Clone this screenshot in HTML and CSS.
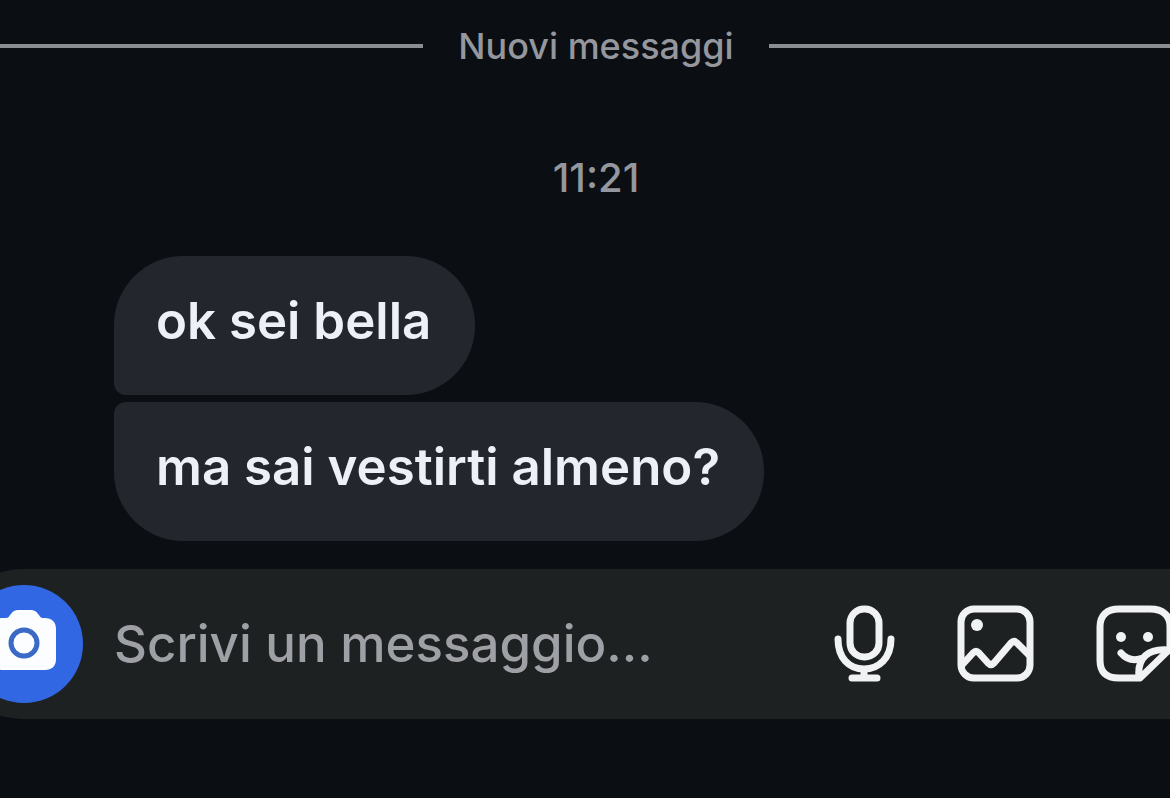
FILE: index.html
```html
<!DOCTYPE html>
<html lang="it">
<head>
    <meta charset="UTF-8">
    <meta name="viewport" content="width=device-width, initial-scale=1.0">
    <title>Chat</title>
    <link rel="stylesheet" href="styles.css">
</head>
<body>
    <main id="chat">
        <h1 id="nuovi">Nuovi messaggi</h1>
        <time id="ora">11:21</time>
        <ul id="messaggi">
            <li class="messaggio">ok sei bella</li>
            <li class="messaggio">ma sai vestirti almeno?</li>
        </ul>
        <form id="scrivi">
            <button type="button" id="fotocamera" aria-label="Fotocamera">
                <svg width="66" height="70" viewBox="0 0 66 70">
                    <path fill="#fbfdff" d="M12 9h3c2 0 3-1 4-3l1-1c2-3 4-4 7-4h13c3 0 5 1 7 4l1 1c1 2 2 3 4 3h2c7 0 11 4 11 11v30c0 7-4 11-11 11H12C5 61 1 57 1 50V20C1 13 5 9 12 9z"/>
                    <circle cx="33" cy="34" r="13" fill="none" stroke="#3b6ac6" stroke-width="5"/>
                </svg>
            </button>
            <input type="text" id="testo" placeholder="Scrivi un messaggio..." aria-label="Scrivi un messaggio">
            <div id="azioni">
                <button type="button" aria-label="Messaggio vocale">
                    <svg width="60" height="76" viewBox="0 0 60 76">
                        <rect x="15" y="3" width="29" height="48" rx="14"/>
                        <path d="M3 33c0 19 11 30 26 30s27-11 27-30M29 63v8M17 72h25"/>
                    </svg>
                </button>
                <button type="button" aria-label="Galleria">
                    <svg width="76" height="76" viewBox="0 0 76 76">
                        <rect x="3" y="3" width="69" height="69" rx="13"/>
                        <circle class="punto" cx="19" cy="19" r="6"/>
                        <path d="M4 59l11-12q3-3 6 0l9 10q3 3 6 0l17-20q3-3 6 0l12 12"/>
                    </svg>
                </button>
                <button type="button" aria-label="Adesivi">
                    <svg width="76" height="76" viewBox="0 0 76 76">
                        <path d="M43 72H22C9 72 3 66 3 54V21C3 9 10 3 22 3h31c13 0 20 6 20 18v22z"/>
                        <path d="M42 71c-2-19 9-29 30-27M24 47c6 7 14 8 22 5"/>
                        <circle class="punto" cx="24" cy="31" r="5"/>
                        <circle class="punto" cx="51" cy="31" r="5"/>
                    </svg>
                </button>
            </div>
        </form>
    </main>
</body>
</html>
```
FILE: styles.css
```css
* {
  box-sizing: border-box;
  font-family: Inter, "Liberation Sans", sans-serif;
}

body {
  margin: 0;
  background-color: #0b0e13;
  color: #94979d;
  overflow: hidden;
}

/* la chat esce un po' dal bordo destro */
#chat {
  margin-right: -22px;
}

#nuovi {
  display: flex;
  align-items: center;
  gap: 35px;
  margin: 0;
  padding-top: 24px;
  font-size: 36px;
  font-weight: 500;
  line-height: 44px;
  white-space: nowrap;
}

#nuovi::before, #nuovi::after {
  content: "";
  flex: 1;
  height: 4px;
  background-color: #8b8d93;
}

#ora {
  display: block;
  margin-top: 88px;
  text-align: center;
  font-size: 40px;
  font-weight: 500;
  line-height: 44px;
}

#messaggi {
  display: flex;
  flex-direction: column;
  align-items: flex-start;
  gap: 7px;
  list-style: none;
  margin: 56px 0 28px;
  padding: 0 0 0 114px;
}

.messaggio {
  padding: 33px 44px 42px 42px;
  border-radius: 69px;
  background-color: #24262e;
  color: #eef0f8;
  font-size: 51px;
  font-weight: 600;
  line-height: 64px;
}

.messaggio:first-child {
  border-bottom-left-radius: 12px;
}

.messaggio:last-child {
  border-top-left-radius: 12px;
}

#scrivi {
  display: flex;
  align-items: center;
  margin: 0 -52px;
  padding: 16px 71px 16px 17px;
  border-radius: 75px;
  background-color: #1e2122;
}

button {
  display: flex;
  align-items: center;
  justify-content: center;
  padding: 0;
  border: 0;
  background: none;
}

#fotocamera {
  width: 118px;
  height: 118px;
  flex-shrink: 0;
  border-radius: 50%;
  background-color: #3267e3;
}

#testo {
  flex: 1;
  min-width: 0;
  padding: 0 0 0 31px;
  border: 0;
  outline: 0;
  background: none;
  color: #eef0f8;
  font-size: 51px;
  font-weight: 500;
  line-height: 64px;
}

#testo::placeholder {
  color: #9fa0a6;
  opacity: 1;
}

#azioni {
  display: flex;
  gap: 63px;
}

#azioni svg {
  overflow: visible;
  fill: none;
  stroke: #f0f2f4;
  stroke-width: 7;
  stroke-linecap: round;
  stroke-linejoin: round;
}

#azioni .punto {
  fill: #f0f2f4;
  stroke: none;
}
```
